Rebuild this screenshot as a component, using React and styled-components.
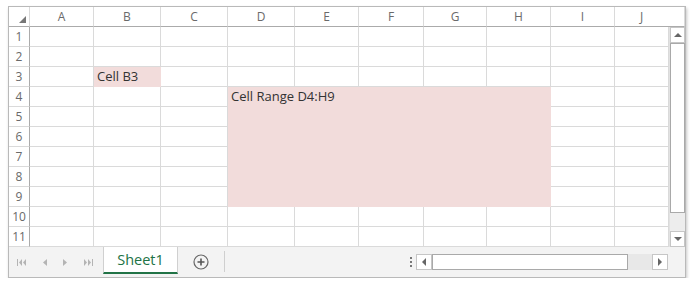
import styled, { createGlobalStyle } from 'styled-components'

const GlobalStyle = createGlobalStyle`
    html, body {
        margin: 0;
        padding: 0;
        background: #fff;
    }
    body {
        font-family: "Open Sans", "Noto Sans", sans-serif;
    }
`

const columns = [
    { key: 'A', width: 64 },
    { key: 'B', width: 67 },
    { key: 'C', width: 67 },
    { key: 'D', width: 67 },
    { key: 'E', width: 64 },
    { key: 'F', width: 65 },
    { key: 'G', width: 63 },
    { key: 'H', width: 64 },
    { key: 'I', width: 64 },
    { key: 'J', width: 54 },
]

const rows = Array.from({ length: 11 }, (_, i) => i + 1)

const PINK = '#f2dcdb'
const GRID = '#dadada'
const HEAD_LINE = '#ababab'

// frame

const Frame = styled.div`
    margin: 6px 0 0 8px;
    width: 678px;
    box-sizing: border-box;
    border: 1px solid #b9b9b9;
    box-shadow: 1px 2px 3px rgba(0, 0, 0, 0.22);
    display: flex;
    flex-direction: column;
    background: #fff;
`

// sheet grid

const Sheet = styled.div`
    display: grid;
    grid-template-columns: 21px ${columns.map(c => `${c.width}px`).join(' ')} 16px;
    grid-template-rows: repeat(12, 20px);
`

const Corner = styled.div`
    grid-column: 1 / 2;
    grid-row: 1 / 2;
    box-sizing: border-box;
    border-right: 1px solid ${GRID};
    border-bottom: 1px solid ${HEAD_LINE};
    position: relative;

    &::after {
        content: '';
        position: absolute;
        right: 3px;
        bottom: 3px;
        border-style: solid;
        border-width: 0 0 7px 7px;
        border-color: transparent transparent #777 transparent;
    }
`

const ColHeader = styled.div`
    grid-column: ${p => p.$col} / span ${p => p.$span || 1};
    grid-row: 1 / 2;
    box-sizing: border-box;
    border-right: 1px solid ${GRID};
    border-bottom: 1px solid ${HEAD_LINE};
    display: flex;
    align-items: center;
    justify-content: center;
    ${p => p.$span > 1 && 'padding-right: 16px;'}
    font-size: 12px;
    color: #6a6a6a;
`

const RowHeader = styled.div`
    grid-column: 1 / 2;
    grid-row: ${p => p.$row} / span 1;
    box-sizing: border-box;
    border-right: 1px solid ${HEAD_LINE};
    border-bottom: 1px solid ${GRID};
    display: flex;
    align-items: center;
    justify-content: center;
    font-size: 12px;
    color: #6a6a6a;
`

const Cell = styled.div`
    grid-column: ${p => p.$col} / span ${p => p.$colSpan || 1};
    grid-row: ${p => p.$row} / span ${p => p.$rowSpan || 1};
    box-sizing: border-box;
    border-right: 1px solid ${p => (p.$fill ? p.$fill : GRID)};
    border-bottom: 1px solid ${p => (p.$fill ? p.$fill : GRID)};
    background: ${p => p.$fill || '#fff'};
    padding: 0 3px;
    font-size: 13px;
    line-height: 19px;
    color: #333;
    white-space: nowrap;
    overflow: hidden;
`

// vertical scrollbar

const VScroll = styled.div`
    grid-column: 12 / 13;
    grid-row: 2 / 13;
    display: flex;
    flex-direction: column;
    background: #ededed;
    border-left: 1px solid #e2e2e2;
`

const ScrollButton = styled.div`
    width: 15px;
    height: 16px;
    box-sizing: border-box;
    border: 1px solid #c6c6c6;
    background: #fff;
    display: flex;
    align-items: center;
    justify-content: center;
    flex: none;
`

const VThumb = styled.div`
    height: 170px;
    box-sizing: border-box;
    border: 1px solid #a9a9a9;
    background: #fff;
    width: 15px;
`

const Spacer = styled.div`
    flex: 1;
`

// tab bar

const TabBar = styled.div`
    height: 30px;
    display: flex;
    align-items: stretch;
    background: #f3f3f3;
`

const NavGroup = styled.div`
    width: 92px;
    display: flex;
    align-items: center;
    justify-content: space-around;
    padding: 0 2px 0 0;
`

const SheetTab = styled.div`
    width: 75px;
    margin-bottom: 3px;
    box-sizing: border-box;
    background: #fff;
    border-left: 1px solid #d0d0d0;
    border-right: 1px solid #d0d0d0;
    border-bottom: 2px solid #217346;
    display: flex;
    align-items: center;
    justify-content: center;
    font-size: 14.5px;
    color: #217346;
`

const AddButton = styled.div`
    width: 46px;
    display: flex;
    align-items: center;
    justify-content: center;
`

const Divider = styled.div`
    width: 1px;
    margin: 4px 0 5px;
    background: #cfcfcf;
`

const HScrollArea = styled.div`
    flex: 1;
    display: flex;
    align-items: center;
    justify-content: flex-end;
    padding-right: 17px;
`

const Grip = styled.div`
    display: flex;
    flex-direction: column;
    gap: 2px;
    margin-right: 4px;

    span {
        width: 2px;
        height: 2px;
        background: #777;
    }
`

const HTrack = styled.div`
    display: flex;
    height: 16px;
    background: #e8e8e8;
`

const HButton = styled(ScrollButton)`
    width: 16px;
    height: 16px;
`

const HThumb = styled.div`
    width: 196px;
    box-sizing: border-box;
    border: 1px solid #a9a9a9;
    background: #fff;
`

const HGap = styled.div`
    width: 24px;
`

const Triangle = ({ dir, color = '#777' }) => {
    const pts = {
        up: '0,5 4,1 8,5',
        down: '0,1 4,5 8,1',
        left: '5,0 1,4 5,8',
        right: '1,0 5,4 1,8',
    }[dir]
    const vertical = dir === 'up' || dir === 'down'
    return (
        <svg width={vertical ? 8 : 6} height={vertical ? 6 : 8} viewBox={vertical ? '0 0 8 6' : '0 0 6 8'}>
            <polygon points={pts} fill={color} />
        </svg>
    )
}

const NavIcon = ({ kind }) => {
    const c = '#b4b4b4'
    if (kind === 'first') {
        return (
            <svg width="10" height="7" viewBox="0 0 10 7">
                <rect x="0" y="0" width="1" height="7" fill={c} />
                <polygon points="5,0 2,3.5 5,7" fill={c} />
                <polygon points="9,0 6,3.5 9,7" fill={c} />
            </svg>
        )
    }
    if (kind === 'last') {
        return (
            <svg width="10" height="7" viewBox="0 0 10 7">
                <polygon points="1,0 4,3.5 1,7" fill={c} />
                <polygon points="5,0 8,3.5 5,7" fill={c} />
                <rect x="9" y="0" width="1" height="7" fill={c} />
            </svg>
        )
    }
    return (
        <svg width="4" height="7" viewBox="0 0 4 7">
            <polygon points={kind === 'prev' ? '4,0 0,3.5 4,7' : '0,0 4,3.5 0,7'} fill={c} />
        </svg>
    )
}

const PlusCircle = () => (
    <svg width="16" height="16" viewBox="0 0 16 16">
        <circle cx="8" cy="8" r="7" fill="none" stroke="#666" strokeWidth="1.2" />
        <path d="M8 4.5v7M4.5 8h7" stroke="#555" strokeWidth="1.6" />
    </svg>
)

function isMerged(col, row) {
    // D4:H9 -> columns 4..8, rows 4..9
    return col >= 4 && col <= 8 && row >= 4 && row <= 9
}

export default function App() {
    return (
        <>
            <GlobalStyle />
            <Frame>
                <Sheet>
                    <Corner />
                    {columns.map((c, i) => (
                        <ColHeader key={c.key} $col={i + 2} $span={c.key === 'J' ? 2 : 1}>
                            {c.key}
                        </ColHeader>
                    ))}

                    {rows.map(r => (
                        <RowHeader key={`rh${r}`} $row={r + 1}>{r}</RowHeader>
                    ))}

                    {rows.map(r =>
                        columns.map((c, i) => {
                            const col = i + 1
                            if (isMerged(col, r)) return null
                            const isB3 = c.key === 'B' && r === 3
                            return (
                                <Cell key={`${c.key}${r}`} $col={i + 2} $row={r + 1} $fill={isB3 ? PINK : null}>
                                    {isB3 ? 'Cell B3' : null}
                                </Cell>
                            )
                        })
                    )}

                    <Cell $col={5} $colSpan={5} $row={5} $rowSpan={6} $fill={PINK}>
                        Cell Range D4:H9
                    </Cell>

                    <VScroll>
                        <ScrollButton><Triangle dir="up" color="#666" /></ScrollButton>
                        <VThumb />
                        <Spacer />
                        <ScrollButton><Triangle dir="down" color="#666" /></ScrollButton>
                    </VScroll>
                </Sheet>

                <TabBar>
                    <NavGroup>
                        <NavIcon kind="first" />
                        <NavIcon kind="prev" />
                        <NavIcon kind="next" />
                        <NavIcon kind="last" />
                    </NavGroup>
                    <SheetTab>Sheet1</SheetTab>
                    <AddButton><PlusCircle /></AddButton>
                    <Divider />
                    <HScrollArea>
                        <Grip><span /><span /><span /></Grip>
                        <HTrack>
                            <HButton><Triangle dir="left" color="#666" /></HButton>
                            <HThumb />
                            <HGap />
                            <HButton><Triangle dir="right" color="#666" /></HButton>
                        </HTrack>
                    </HScrollArea>
                </TabBar>
            </Frame>
        </>
    )
}
